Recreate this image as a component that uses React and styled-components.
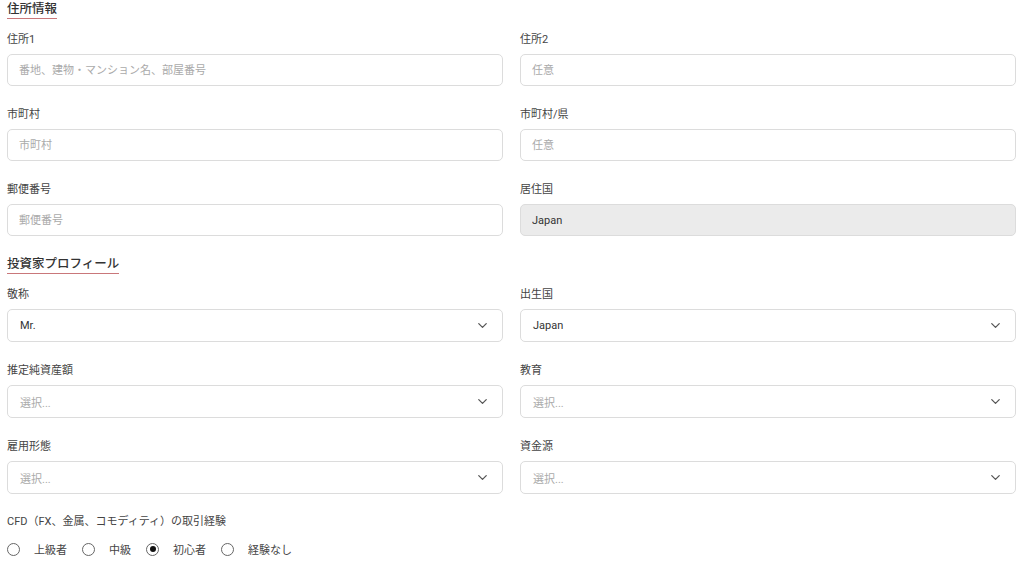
import React from 'react';
import styled, { createGlobalStyle } from 'styled-components';
import { ChevronDown } from 'lucide-react';

const GlobalStyle = createGlobalStyle`
  html, body {
    margin: 0;
    padding: 0;
    background: #fff;
  }
  body {
    font-family: Roboto, "Noto Sans CJK JP", "Noto Sans", sans-serif;
    color: #333;
  }
  * {
    box-sizing: border-box;
  }
`;

const Page = styled.div`
  padding: 1px 8px 0 7px;
  width: 1024px;
`;

const Section = styled.section`
  display: flex;
  flex-direction: column;
  align-items: flex-start;
  margin-top: ${(p) => p.$top || 0}px;
`;

const SectionTitle = styled.h3`
  margin: 0;
  font-size: 12.5px;
  line-height: 16px;
  font-weight: 500;
  color: #333;
  padding-bottom: 1px;
  border-bottom: 1.5px solid #c9777a;
`;

const Grid = styled.div`
  display: grid;
  grid-template-columns: 496px 496px;
  column-gap: 17px;
  row-gap: 21px;
  margin-top: 13px;
`;

const Field = styled.div`
  display: flex;
  flex-direction: column;
`;

const Label = styled.label`
  font-size: 11px;
  line-height: 16px;
  color: #444;
  margin-bottom: 6px;
`;

const Input = styled.input`
  height: 32px;
  width: 100%;
  border: 1px solid #dcdcdc;
  border-radius: 5px;
  padding: 0 11px;
  font-family: inherit;
  font-size: 11px;
  color: #333;
  background: ${(p) => (p.disabled ? '#ebebeb' : '#fff')};
  outline: none;

  &::placeholder {
    color: #aaa;
  }
`;

const SelectBox = styled.div`
  height: 33px;
  border: 1px solid #dcdcdc;
  border-radius: 5px;
  padding: 0 12px 0 12px;
  display: flex;
  align-items: center;
  justify-content: space-between;
  font-size: 11px;
  color: ${(p) => (p.$empty ? '#aaa' : '#333')};
  background: #fff;

  svg {
    color: #555;
  }
`;

const CfdBlock = styled.div`
  margin-top: 20px;
  display: flex;
  flex-direction: column;
`;

const RadioRow = styled.div`
  display: flex;
  align-items: center;
  margin-top: 5px;
  height: 16px;
`;

const RadioItem = styled.label`
  display: flex;
  align-items: center;
  font-size: 11px;
  color: #444;
  margin-right: 15px;
`;

const RadioCircle = styled.span`
  width: 13px;
  height: 13px;
  border-radius: 50%;
  border: 1px solid #666;
  display: flex;
  align-items: center;
  justify-content: center;
  margin-right: 14px;

  &::after {
    content: '';
    width: 6px;
    height: 6px;
    border-radius: 50%;
    background: ${(p) => (p.$checked ? '#111' : 'transparent')};
  }
`;

const TextField = ({ label, placeholder, value, disabled }) => (
  <Field>
    <Label>{label}</Label>
    <Input placeholder={placeholder} defaultValue={value} disabled={disabled} />
  </Field>
);

const SelectField = ({ label, value }) => (
  <Field>
    <Label>{label}</Label>
    <SelectBox $empty={!value}>
      <span>{value || '選択...'}</span>
      <ChevronDown size={15} strokeWidth={2} />
    </SelectBox>
  </Field>
);

const levels = ['上級者', '中級', '初心者', '経験なし'];

export default function App() {
  return (
    <>
      <GlobalStyle />
      <Page>
        <Section>
          <SectionTitle>住所情報</SectionTitle>
          <Grid>
            <TextField label="住所1" placeholder="番地、建物・マンション名、部屋番号" />
            <TextField label="住所2" placeholder="任意" />
            <TextField label="市町村" placeholder="市町村" />
            <TextField label="市町村/県" placeholder="任意" />
            <TextField label="郵便番号" placeholder="郵便番号" />
            <TextField label="居住国" value="Japan" disabled />
          </Grid>
        </Section>
        <Section $top={20}>
          <SectionTitle>投資家プロフィール</SectionTitle>
          <Grid>
            <SelectField label="敬称" value="Mr." />
            <SelectField label="出生国" value="Japan" />
            <SelectField label="推定純資産額" />
            <SelectField label="教育" />
            <SelectField label="雇用形態" />
            <SelectField label="資金源" />
          </Grid>
        </Section>
        <CfdBlock>
          <Label as="div">CFD（FX、金属、コモディティ）の取引経験</Label>
          <RadioRow>
            {levels.map((l) => (
              <RadioItem key={l}>
                <RadioCircle $checked={l === '初心者'} />
                {l}
              </RadioItem>
            ))}
          </RadioRow>
        </CfdBlock>
      </Page>
    </>
  );
}
